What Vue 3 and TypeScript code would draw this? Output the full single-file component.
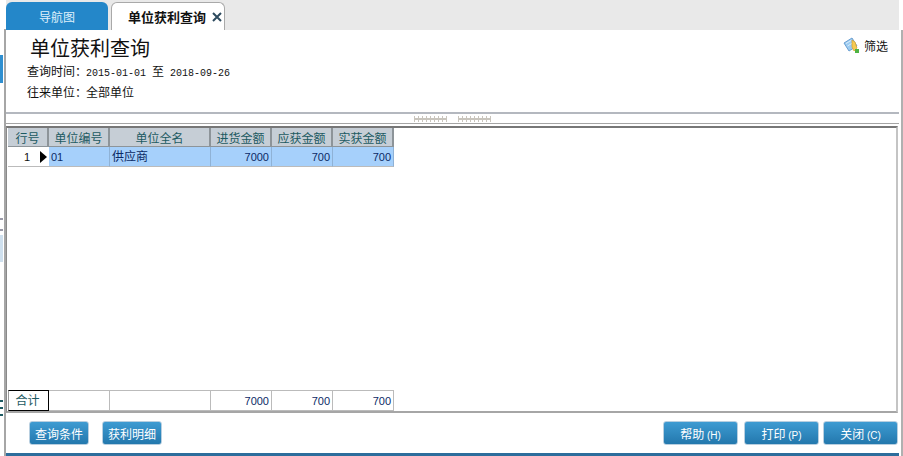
<script setup lang="ts">
interface Row {
  no: string
  code: string
  name: string
  buy: string
  due: string
  real: string
}

const rows: Row[] = [{ no: '1', code: '01', name: '供应商', buy: '7000', due: '700', real: '700' }]
const heads = ['行号', '单位编号', '单位全名', '进货金额', '应获金额', '实获金额']
</script>

<template>
  <div class="page">
    <div class="rail"></div>
    <div class="main">
      <div class="tabs">
        <div class="tab nav">导航图</div>
        <div class="tab active">
          <span>单位获利查询</span>
          <svg class="close" width="10" height="10" viewBox="0 0 10 10">
            <path d="M1 1L9 9M9 1L1 9" stroke="#2d4a5e" stroke-width="2" fill="none" />
          </svg>
        </div>
      </div>

      <div class="head">
        <div class="info">
          <h1>单位获利查询</h1>
          <p>查询时间：<span class="num val">2015-01-01</span><span class="to">至</span><span class="num">2018-09-26</span></p>
          <p>往来单位：<span class="val">全部单位</span></p>
        </div>
        <div class="filter">
          <svg width="17" height="17" viewBox="0 0 17 17">
            <path d="M1 6L9 1L14 9L6 14Z" fill="#9ccbf0" stroke="#6a9fd2" />
            <path d="M3 6.500L8 3.500M4.500 9L9.500 6" stroke="#d8ecfb" />
            <path d="M9 3L12 5L14 11L11 14L9 10Z" fill="#f5cb52" stroke="#d9a02c" stroke-width=".7" />
            <rect x="12" y="12" width="4" height="4" fill="#4fb344" />
          </svg>
          <span>筛选</span>
        </div>
      </div>

      <div class="splitter">
        <span class="grip"></span>
        <span class="grip"></span>
      </div>

      <div class="grid-box">
        <div class="grid">
          <div class="grid-head">
            <div v-for="h in heads" :key="h" class="cell th">{{ h }}</div>
          </div>
          <div v-for="r in rows" :key="r.no" class="grid-row">
            <div class="cell no">
              <span class="digits">{{ r.no }}</span>
              <i class="arrow"></i>
            </div>
            <div class="cell sel digits">{{ r.code }}</div>
            <div class="cell sel label">{{ r.name }}</div>
            <div class="cell sel right digits">{{ r.buy }}</div>
            <div class="cell sel right digits">{{ r.due }}</div>
            <div class="cell sel right digits">{{ r.real }}</div>
          </div>
          <div class="spacer"></div>
          <div class="grid-foot">
            <div class="cell total">合计</div>
            <div class="cell foot"></div>
            <div class="cell foot"></div>
            <div class="cell foot right digits">7000</div>
            <div class="cell foot right digits">700</div>
            <div class="cell foot right digits">700</div>
          </div>
        </div>
      </div>

      <div class="actions">
        <button class="btn small">查询条件</button>
        <button class="btn small second">获利明细</button>
        <div class="push"></div>
        <button class="btn wide">帮助 <span class="key">(H)</span></button>
        <button class="btn wide print">打印 <span class="key">(P)</span></button>
        <button class="btn wide close-btn">关闭 <span class="key">(C)</span></button>
      </div>
      <div class="bottom"></div>
    </div>
    <div class="edge"></div>
  </div>
</template>

<style scoped>
.page {
  width: 903px;
  height: 456px;
  display: flex;
  overflow: hidden;
  background: #fff;
  font-family: "Noto Sans CJK SC", "Liberation Sans", sans-serif;
  font-size: 12px;
  color: #111;
}

.rail {
  width: 6px;
  flex: none;
  background:
    linear-gradient(#a6a6a6, #a6a6a6) 4px 29px / 2px 100% no-repeat,
    linear-gradient(#fff 0 55px, #2f8fd0 55px 83px, #fff 83px 218px, #9a9aa8 218px 220px, #fff 220px 229px,
      #9a9aa8 229px 231px, #fff 231px 235px, #cfe0ee 235px 262px, #fff 262px 400px, #1c5a62 400px 402px,
      #fff 402px 407px, #1c5a62 407px 409px, #fff 409px 414px, #1c5a62 414px 416px, #fff 416px) 0 0 / 3px 100% no-repeat;
}

.main {
  width: 893px;
  flex: none;
  display: flex;
  flex-direction: column;
}

.edge {
  flex: 1;
  margin: 30px 0 0 2px;
  background: #b0b0b0;
}

.tabs {
  height: 30px;
  flex: none;
  display: flex;
  gap: 3px;
  align-items: flex-end;
  background: #e9e9e9;
}

.tab {
  height: 28px;
  box-sizing: border-box;
  border-radius: 6px 6px 0 0;
  display: flex;
  align-items: center;
  justify-content: center;
}

.nav {
  width: 102px;
  background: #2487c9;
  color: #dff0fb;
  font-size: 12px;
}

.active {
  width: 114px;
  gap: 6px;
  padding-left: 14px;
  background: #fff;
  border: 1px solid #a9a9a9;
  border-bottom: none;
  font-size: 13px;
  font-weight: 700;
}

.head {
  height: 82px;
  flex: none;
  display: flex;
  justify-content: space-between;
  box-sizing: border-box;
  padding: 6px 11px 0 21px;
}

h1 {
  margin: 0 0 1px 3px;
  font-size: 20px;
  font-weight: 400;
  line-height: 24px;
}

p {
  margin: 0;
  height: 20px;
  line-height: 20px;
  font-size: 12px;
}

p + p {
  margin-top: 1px;
}

.num {
  font-family: "Liberation Mono", monospace;
  font-size: 10px;
}

.val {
  margin-left: -1px;
}

.to {
  margin: 0 6px;
}

.digits {
  font-family: "Liberation Sans", sans-serif;
  font-size: 11px;
}

.filter {
  display: flex;
  align-items: center;
  gap: 4px;
  height: 17px;
  margin-top: 1px;
}

.splitter {
  height: 12px;
  flex: none;
  box-sizing: border-box;
  border-top: 2px solid #b4b8bf;
  border-bottom: 1px solid #a5a5a5;
  display: flex;
  justify-content: center;
  align-items: center;
  gap: 11px;
  padding-right: 0;
}

.grip {
  width: 33px;
  height: 6px;
  background:
    linear-gradient(#c9c5bd, #c9c5bd) 0 2px / 100% 2px no-repeat,
    repeating-linear-gradient(90deg, #c9c5bd 0 1px, #fff 1px 4px);
}

.grid-box {
  height: 287px;
  flex: none;
  margin: 2px 1px 0 0;
  padding: 0 0 2px 1px;
  border-top: 2px solid #777;
  border-right: 2px solid #c4c4c4;
  border-bottom: 2px solid #a6a6a6;
  border-left: 1px solid #8a8a8a;
  box-sizing: border-box;
}

.grid {
  height: 100%;
  display: flex;
  flex-direction: column;
}

.grid-head,
.grid-row,
.grid-foot {
  display: grid;
  grid-template-columns: 41px 61px 101px 61px 61px 61px;
  height: 19px;
  flex: none;
}

.cell {
  box-sizing: border-box;
  padding: 0 2px;
  display: flex;
  align-items: center;
  white-space: nowrap;
}

.th {
  justify-content: center;
  background: #c6ced6;
  color: #1c5a62;
  border-right: 2px solid #8d9499;
  border-bottom: 1px solid #8d9499;
}

.no {
  justify-content: flex-end;
  gap: 10px;
  border-bottom: 1px solid #bbb;
  padding-right: 2px;
}

.arrow {
  width: 0;
  height: 0;
  border-left: 7px solid #000;
  border-top: 6px solid transparent;
  border-bottom: 6px solid transparent;
}

.sel {
  background: #a6d0fb;
  color: #0b2a66;
  border-right: 1px solid #8fb2d6;
  border-bottom: 1px solid #bbb;
}

.label {
  padding-bottom: 2px;
}

.right {
  justify-content: flex-end;
}

.spacer {
  flex: 1;
}

.total {
  justify-content: center;
  border: 1px solid #000;
  border-left-color: #999;
  color: #1c5a62;
  padding: 0 2px 2px 0;
}

.foot {
  color: #0b2a66;
  border-top: 1px solid #bbb;
  border-right: 1px solid #bbb;
  border-bottom: 1px solid #bbb;
}

.actions {
  height: 40px;
  flex: none;
  display: flex;
  align-items: flex-start;
  box-sizing: border-box;
  padding: 8px 1px 0 23px;
}

.btn {
  height: 24px;
  box-sizing: border-box;
  border: 1px solid #b8cfe0;
  border-radius: 3px;
  background: linear-gradient(#3e9bd2, #2378ad);
  color: #fff;
  font-family: inherit;
  font-size: 12px;
  padding: 0;
}

.small {
  width: 60px;
}

.second {
  margin-left: 13px;
}

.push {
  flex: 1;
}

.wide {
  width: 75px;
}

.print {
  margin-left: 6px;
}

.close-btn {
  margin-left: 4px;
}

.key {
  font-family: "Liberation Sans", sans-serif;
  font-size: 10px;
}

.bottom {
  height: 3px;
  flex: none;
  background: #2d6d9c;
}
</style>
